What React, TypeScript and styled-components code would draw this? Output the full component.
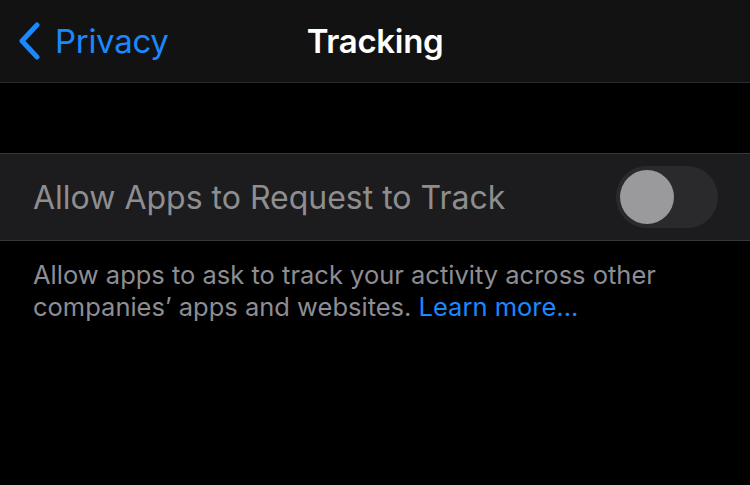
import React from "react";
import styled, { createGlobalStyle } from "styled-components";

const Global = createGlobalStyle`
  html, body { margin: 0; padding: 0; background: #000; }
  body { font-family: Inter, "Noto Sans", sans-serif; -webkit-font-smoothing: antialiased; }
`;

const Page = styled.div`
  width: 750px;
  height: 485px;
  background: #000;
  display: flex;
  flex-direction: column;
  overflow: hidden;
`;

const NavBar = styled.header`
  height: 82px;
  background: #121212;
  border-bottom: 1px solid #2a2a2c;
  display: grid;
  grid-template-columns: 1fr auto 1fr;
  align-items: center;
`;

const BackButton = styled.div`
  display: flex;
  align-items: center;
  gap: 14px;
  padding-left: 17px;
  color: #1a88ff;
  font-size: 33px;
  letter-spacing: -0.3px;
`;

const Title = styled.h1`
  margin: 0;
  color: #fff;
  font-size: 33px;
  font-weight: 600;
  letter-spacing: -0.3px;
`;

const Spacer = styled.div`
  height: 70px;
`;

const Row = styled.div`
  height: 86px;
  background: #1c1c1e;
  border-top: 1px solid #38383a;
  border-bottom: 1px solid #38383a;
  display: flex;
  align-items: center;
  justify-content: space-between;
  padding: 0 32px 0 33px;
`;

const RowLabel = styled.span`
  color: #8e8e90;
  font-size: 32px;
`;

const Track = styled.div`
  width: 102px;
  height: 62px;
  border-radius: 31px;
  background: #2a2a2d;
  display: flex;
  align-items: center;
  padding: 0 4px;
  box-sizing: border-box;
`;

const Knob = styled.div`
  width: 54px;
  height: 54px;
  border-radius: 50%;
  background: #9a9a9c;
`;

const Footer = styled.p`
  margin: 0;
  padding: 18px 40px 0 33px;
  color: #8d8d93;
  font-size: 25.5px;
  line-height: 32px;
`;

const Link = styled.span`
  color: #1a88ff;
`;

export default function App() {
  return (
    <Page>
      <Global />
      <NavBar>
        <BackButton>
          <svg width="24" height="38" viewBox="0 0 24 38">
            <path d="M20 3 L5 19 L20 35" fill="none" stroke="#1a88ff" strokeWidth="5" strokeLinecap="round" strokeLinejoin="round" />
          </svg>
          Privacy
        </BackButton>
        <Title>Tracking</Title>
        <div />
      </NavBar>
      <Spacer />
      <Row>
        <RowLabel>Allow Apps to Request to Track</RowLabel>
        <Track>
          <Knob />
        </Track>
      </Row>
      <Footer>
        Allow apps to ask to track your activity across other companies’ apps and websites. <Link>Learn more...</Link>
      </Footer>
    </Page>
  );
}
